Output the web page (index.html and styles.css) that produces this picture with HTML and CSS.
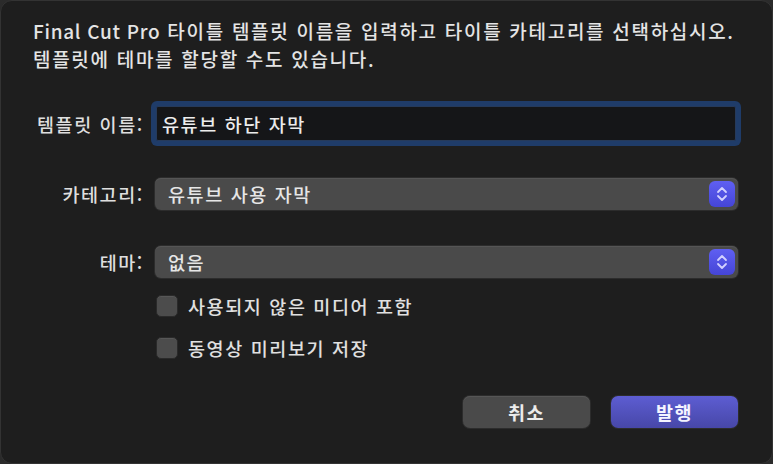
FILE: index.html
```html
<!DOCTYPE html>
<html lang="ko">
<head>
<meta charset="utf-8">
<link rel="stylesheet" href="styles.css">
</head>
<body>
<div class="window">
  <p class="intro"><span class="latin">Final Cut Pro</span> 타이틀 템플릿 이름을 입력하고 타이틀 카테고리를 선택하십시오.<br>템플릿에 테마를 할당할 수도 있습니다.</p>
  <div class="form">
    <label class="label row-name">템플릿 이름:</label>
    <div class="field row-name"><span>유튜브 하단 자막</span></div>

    <label class="label row-cat">카테고리:</label>
    <div class="popup row-cat"><span>유튜브 사용 자막</span>
      <span class="stepper"><svg width="14" height="18" viewBox="0 0 14 18"><path d="M3 7 L7 3 L11 7" /><path d="M3 11 L7 15 L11 11" /></svg></span>
    </div>

    <label class="label row-theme">테마:</label>
    <div class="popup row-theme"><span>없음</span>
      <span class="stepper"><svg width="14" height="18" viewBox="0 0 14 18"><path d="M3 7 L7 3 L11 7" /><path d="M3 11 L7 15 L11 11" /></svg></span>
    </div>

    <div class="check row-c1"><span class="box"></span><span>사용되지 않은 미디어 포함</span></div>
    <div class="check row-c2"><span class="box"></span><span>동영상 미리보기 저장</span></div>
  </div>
  <div class="buttons">
    <button class="btn cancel">취소</button>
    <button class="btn primary">발행</button>
  </div>
</div>
</body>
</html>
```

FILE: styles.css
```css
html, body {
  margin: 0;
  padding: 0;
  background: #2b2b2b;
}
body {
  font-family: "Noto Sans CJK KR", "Noto Sans", sans-serif;
  font-weight: 500;
  color: #e2e2e2;
}
.window {
  box-sizing: border-box;
  width: 773px;
  height: 464px;
  background: #1e1e1e;
  border: 1px solid #333;
  border-radius: 12px;
  padding: 16px 34px 0 32px;
  overflow: hidden;
}
.intro {
  margin: 0;
  font-size: 19px;
  line-height: 28px;
  letter-spacing: 1.7px;
  color: #e4e4e4;
  white-space: nowrap;
}
.latin {
  letter-spacing: 0.7px;
}
.form {
  display: grid;
  grid-template-columns: 111px 1fr;
  column-gap: 11px;
  margin-top: 33px;
  font-size: 18.5px;
  letter-spacing: 1.6px;
}
.label {
  text-align: right;
  align-self: center;
  white-space: nowrap;
  color: #dedede;
  line-height: 24px;
}
.row-name { grid-row: 1; }
.row-cat { grid-row: 2; margin-top: 37px; }
.row-theme { grid-row: 3; margin-top: 36px; }
.row-c1 { grid-row: 4; margin-top: 17px; }
.row-c2 { grid-row: 5; margin-top: 20px; }
.label.row-name, .label.row-cat, .label.row-theme { grid-column: 1; }

.field {
  grid-column: 2;
  box-sizing: border-box;
  height: 35px;
  margin-right: 2px;
  margin-left: 1px;
  background: #151618;
  border: 1px solid #263a5a;
  border-radius: 2px;
  box-shadow: 0 0 0 5px #1f3c69;
  display: flex;
  align-items: center;
  padding-left: 5px;
  color: #ececec;
}
.popup {
  grid-column: 2;
  box-sizing: border-box;
  height: 32px;
  background: #4a4a4a;
  border-radius: 6px;
  box-shadow: 0 0 0 1px #2c2c2c, inset 0 1px 0 #555;
  display: flex;
  align-items: center;
  justify-content: space-between;
  padding: 0 3px 0 13px;
  color: #e6e6e6;
}
.stepper {
  width: 26px;
  height: 26px;
  border-radius: 6px;
  background: linear-gradient(#5f5ff2, #4545d6);
  display: flex;
  align-items: center;
  justify-content: center;
}
.stepper svg path {
  fill: none;
  stroke: #d2d0ff;
  stroke-width: 1.8;
  stroke-linecap: round;
  stroke-linejoin: round;
}
.check {
  grid-column: 2;
  display: flex;
  align-items: center;
  gap: 10px;
  height: 22px;
  color: #e0e0e0;
}
.box {
  box-sizing: border-box;
  width: 22px;
  height: 22px;
  margin-left: 1px;
  border-radius: 5px;
  background: #4c4c4c;
  border: 1px solid #2a2a2a;
  box-shadow: inset 0 1px 0 #575757;
}
.buttons {
  display: flex;
  justify-content: flex-end;
  gap: 21px;
  margin-top: 37px;
  padding-right: 0;
}
.btn {
  width: 127px;
  height: 32px;
  border: none;
  border-radius: 7px;
  font-family: "Noto Sans CJK KR", "Noto Sans", sans-serif;
  font-size: 18.5px;
  font-weight: 700;
  letter-spacing: 1.4px;
  color: #ececec;
  padding: 0;
}
.cancel {
  background: #4a4a4a;
  box-shadow: 0 0 0 1px #2c2c2c, inset 0 1px 0 #565656;
}
.primary {
  background: linear-gradient(#5d5dd2, #4747a8);
  color: #f4f4ff;
  box-shadow: 0 0 0 1px #2c2c2c;
}
```
